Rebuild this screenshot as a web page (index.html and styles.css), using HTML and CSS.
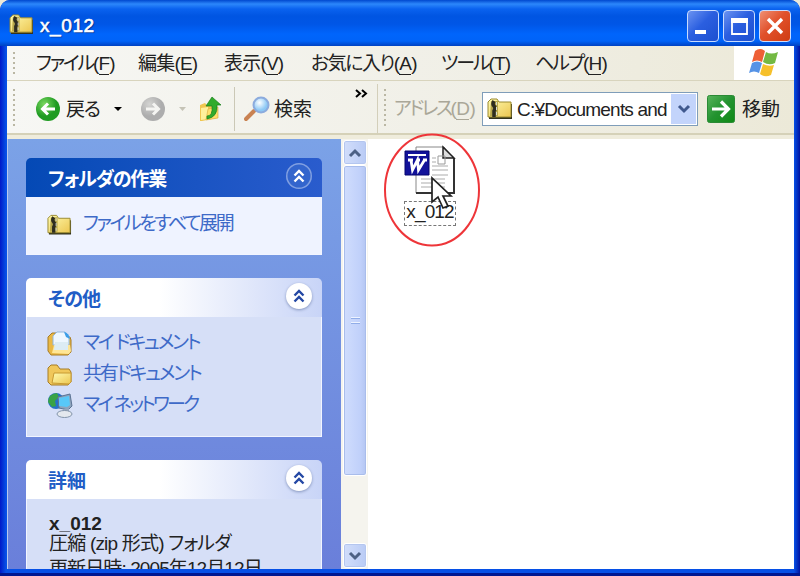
FILE: index.html
```
<!DOCTYPE html>
<html lang="ja">
<head>
    <meta charset="UTF-8">
    <title>x_012</title>
    <link rel="stylesheet" href="styles.css">
</head>
<body>
    <svg class="defs" width="0" height="0">
        <defs>
            <linearGradient id="gold" x1="0" x2="1" y2="1">
                <stop offset="0" stop-color="#fffbb0"/>
                <stop offset="1" stop-color="#ecc650"/>
            </linearGradient>
            <linearGradient id="go-green" x1="0" x2="1" y2="1">
                <stop offset="0" stop-color="#58b45c"/>
                <stop offset=".5" stop-color="#239330"/>
                <stop offset="1" stop-color="#0f8a14"/>
            </linearGradient>
            <radialGradient id="green" cx=".35" cy=".3">
                <stop offset="0" stop-color="#7bd860"/>
                <stop offset="1" stop-color="#1f9b22"/>
            </radialGradient>
            <radialGradient id="gray" cx=".35" cy=".3">
                <stop offset="0" stop-color="#d4d4d2"/>
                <stop offset="1" stop-color="#adadad"/>
            </radialGradient>
            <radialGradient id="lens" cx=".4" cy=".35">
                <stop offset="0" stop-color="#fff"/>
                <stop offset="1" stop-color="#8cc8f5"/>
            </radialGradient>
            <symbol id="zip" viewBox="0 0 26 22">
                <path d="M2 21V6l3-3h6l2 3h12v15z" fill="#33321c"/>
                <path d="M1 19V4l3-3h6l2 3h12v15z" fill="url(#gold)" stroke="#9a8a30"/>
                <path d="M4 3h7v15H3z" fill="#b7a84c"/>
                <path d="M7 3q-2 3 0 5t0 5v6" fill="none" stroke="#2d2c20" stroke-width="3.500"/>
                <path d="M9.500 4v14" stroke="#d9d9cf" stroke-dasharray="3 2"/>
            </symbol>
            <symbol id="chevrons" viewBox="0 0 26 26">
                <path d="M8.500 12.500L13 8l4.500 4.500M8.500 18.500L13 14l4.500 4.500" fill="none" stroke="currentColor" stroke-width="2.400"/>
            </symbol>
        </defs>
    </svg>

    <div class="window">
        <div class="titlebar">
            <svg class="title-icon" width="25" height="21"><use href="#zip"/></svg>
            <div class="title">x_012</div>
            <div class="window-buttons">
                <button class="win-btn">
                    <svg width="30" height="30"><path d="M7 19h11v4H7z" fill="#fff"/></svg>
                </button>
                <button class="win-btn">
                    <svg width="30" height="30"><path d="M8 8h15v15H8z" fill="none" stroke="#fff" stroke-width="1.800"/><path d="M7 7h17v5H7z" fill="#fff"/></svg>
                </button>
                <button class="win-btn close">
                    <svg width="30" height="30"><path d="M8 8l14 14M22 8L8 22" stroke="#fff" stroke-width="3.400"/></svg>
                </button>
            </div>
        </div>

        <div class="menubar">
            <div class="grip"></div>
            <div class="menu">
                <div><span class="kana">ファイル</span>(<u>F</u>)</div>
                <div>編集(<u>E</u>)</div>
                <div>表示(<u>V</u>)</div>
                <div><span class="mixed">お気に入り</span>(<u>A</u>)</div>
                <div><span class="kana">ツール</span>(<u>T</u>)</div>
                <div><span class="kana">ヘルプ</span>(<u>H</u>)</div>
            </div>
            <div class="throbber">
                <svg width="32" height="30" viewBox="0 0 32 30">
                    <path d="M7 3q5-4 10 0l-3 11q-5-3-10 0z" fill="#ee5f35"/>
                    <path d="M18 4q5 3 12 0l-3 11q-6 3-12-1z" fill="#74b943"/>
                    <path d="M4 15q5-3 10 0l-3 10q-5-3-10 0z" fill="#5593e6"/>
                    <path d="M15 16q6 3 11 1l-3 10q-6 3-11-1z" fill="#f6c02b"/>
                </svg>
            </div>
        </div>

        <div class="toolbar">
            <div class="nav-tools">
                <div class="grip tall"></div>
                <svg class="back" width="26" height="26"><circle cx="13" cy="13" r="12" fill="url(#green)"/><path d="M20 13H8M13 7.500L7.500 13l5.500 5.500" fill="none" stroke="#fff" stroke-width="3"/></svg>
                <span class="back-label">戻る</span>
                <svg class="drop" width="10" height="6"><path d="M1 1h8L5 5z" fill="#000"/></svg>
                <svg class="forward" width="26" height="26"><circle cx="13" cy="13" r="12" fill="url(#gray)"/><path d="M6 13h12M13 7.500l5.500 5.500-5.500 5.500" fill="none" stroke="#f5f5f2" stroke-width="3"/></svg>
                <svg class="drop-off" width="9" height="6"><path d="M1 1h7L4.500 5z" fill="#c5c3b6"/></svg>
                <svg class="up" width="24" height="26">
                    <path d="M1 9l5-2 3 3h9v12L3 25H1z" fill="#f0c750"/>
                    <path d="M2 24V12l7-1v12z" fill="#fff09a"/>
                    <path d="M7 24l12-2V11L9 13z" fill="#ffdf6b" stroke="#d5a83c" stroke-width=".6"/>
                    <path d="M8 20q6 0 5-10H7l6-9 9 8h-4q1 12-10 14z" fill="#31ab2b" stroke="#197f1b" stroke-width=".7"/>
                </svg>
                <div class="sep"></div>
                <svg class="search" width="26" height="26">
                    <path d="M2 23l8-8" stroke="#c98252" stroke-width="4" stroke-linecap="round"/>
                    <circle cx="17" cy="9" r="7.500" fill="url(#lens)" stroke="#8cabdd" stroke-width="2"/>
                </svg>
                <span class="search-label">検索</span>
                <svg class="more" width="14" height="10"><path d="M1 1l4 3.500L1 8M7 1l4 3.500L7 8" fill="none" stroke="#000" stroke-width="2"/></svg>
            </div>
            <div class="address-tools">
                <div class="grip tall"></div>
                <div class="address-label"><span>アドレス</span>(<u>D</u>)</div>
                <div class="address">
                    <svg width="26" height="22"><use href="#zip"/></svg>
                    <div class="path">C:¥Documents and</div>
                    <div class="address-drop"><svg width="14" height="10"><path d="M2 2l5 5 5-5" fill="none" stroke="#40598e" stroke-width="3"/></svg></div>
                </div>
                <svg class="go" width="28" height="28"><rect x=".5" y=".5" width="27" height="27" rx="2" fill="url(#go-green)" stroke="#2b8a35"/><path d="M5 14h16M14 6.500l7.500 7.500-7.500 7.500" fill="none" stroke="#fff" stroke-width="3.200"/></svg>
                <span class="go-label">移動</span>
            </div>
        </div>

        <div class="content">
            <div class="sidebar">
                <div class="group primary">
                    <div class="group-head">
                        <h2 class="head-tasks">フォルダの作業</h2>
                        <div class="toggle"><svg width="26" height="26"><use href="#chevrons"/></svg></div>
                    </div>
                    <div class="group-body">
                        <div class="task">
                            <svg width="25" height="22"><use href="#zip"/></svg>
                            <a class="t-extract">ファイルをすべて展開</a>
                        </div>
                    </div>
                </div>

                <div class="group other">
                    <div class="group-head">
                        <h2 class="head-other">その他</h2>
                        <div class="toggle"><svg width="26" height="26"><use href="#chevrons"/></svg></div>
                    </div>
                    <div class="group-body">
                        <div class="task">
                            <svg width="26" height="25">
                                <path d="M1 20V6l4-4h6v4h12l1 3v12l-3 3H4z" fill="#e9b846" stroke="#a77c25"/>
                                <path d="M6 14V5l4-4h8l4 5v8z" fill="#eef7ff" stroke="#91b7dc"/>
                                <path d="M17 1q5 1 6 7l-4-2z" fill="#3b9ee8"/>
                                <path d="M5 22l2-8h16l1 6-2 3z" fill="#ffe696"/>
                                <path d="M8 11h13v8H7z" fill="#dcecf4"/>
                            </svg>
                            <a class="t-mydocs">マイ ドキュメント</a>
                        </div>
                        <div class="task">
                            <svg width="26" height="25">
                                <path d="M1 20V6l3-3h6l3 4h9l2 3v10l-3 3H4z" fill="#f0c75a" stroke="#a77c25"/>
                                <path d="M5 21l2-10h17v9l-2 2z" fill="url(#gold)" stroke="#c89a32"/>
                            </svg>
                            <a class="t-shared">共有ドキュメント</a>
                        </div>
                        <div class="task">
                            <svg width="26" height="27">
                                <circle cx="9" cy="9" r="8" fill="#2671c9"/>
                                <path d="M1 10q0-8 9-9l2 4-4 4 1 5-4 1z" fill="#39a346"/>
                                <path d="M11 5l12-3 2 12-4 4-9-2z" fill="#8da4bd" stroke="#5b7393"/>
                                <path d="M12 6l10-2 1 9-3 2-8-1z" fill="#58c8f8"/>
                                <path d="M16 17h6v4h-6z" fill="#93a5bb"/>
                                <ellipse cx="17.500" cy="22" rx="7.500" ry="3.500" fill="#e4e8ee" stroke="#8394aa"/>
                            </svg>
                            <a class="t-network">マイ ネットワーク</a>
                        </div>
                    </div>
                </div>

                <div class="group details">
                    <div class="group-head">
                        <h2 class="head-details">詳細</h2>
                        <div class="toggle"><svg width="26" height="26"><use href="#chevrons"/></svg></div>
                    </div>
                    <div class="group-body">
                        <b>x_012</b>
                        <p class="d-type">圧縮 (zip 形式) フォルダ</p>
                        <p class="d-date">更新日時: 2005年12月12日</p>
                    </div>
                </div>
            </div>

            <div class="scrollbar">
                <div class="scroll-btn"><svg width="14" height="10"><path d="M2 8l5-5 5 5" fill="none" stroke="#4d6185" stroke-width="3"/></svg></div>
                <div class="thumb"><i></i><i></i></div>
                <div class="track"></div>
                <div class="scroll-btn"><svg width="14" height="10"><path d="M2 2l5 5 5-5" fill="none" stroke="#4d6185" stroke-width="3"/></svg></div>
            </div>

            <div class="files">
                <div class="file">
                    <svg width="52" height="52">
                        <path d="M12 2h28l10 12v34H12z" fill="#fff" stroke="#888"/>
                        <path d="M12 48h38V13" fill="none" stroke="#333" stroke-width="2"/>
                        <path d="M39 2v11h11z" fill="#ddd" stroke="#222" stroke-width="1.500"/>
                        <path d="M28 13h4M28 17h4M28 21h16M28 25h16M17 34h24M17 38h24M17 42h24M28 30h16" stroke="#c8c8c8" stroke-width="1.500"/>
                        <path d="M34 11h7v8h-7z" fill="none" stroke="#999"/>
                        <path d="M1 6h24v24H1z" fill="#12129a" stroke="#05056e"/>
                        <path d="M4 10h18" stroke="#fff" stroke-width="2"/>
                        <path d="M4 15h5M13 15h3M19 15h4M7 15l1.500 10 5-10 1 10 6-10" fill="none" stroke="#fff" stroke-width="2.800"/>
                    </svg>
                    <div class="file-name">x_012</div>
                </div>
                <svg class="highlight" width="98" height="114"><ellipse cx="49" cy="57" rx="47" ry="55.500" fill="none" stroke="#ee3539" stroke-width="2"/></svg>
                <svg class="cursor" width="24" height="36"><path d="M2 2v24l6-5 5 11 5-2-5-10h8z" fill="#fff" stroke="#222" stroke-width="1.700"/></svg>
            </div>
        </div>
    </div>
</body>
</html>
```

FILE: styles.css
```
* {
    box-sizing: border-box;
}
body {
    margin: 0;
    overflow: hidden;
    background: #ece9d8;
    font-family: "Liberation Sans", "Noto Sans CJK JP", sans-serif;
    font-size: 19px;
    color: #222;
}
svg {
    display: block;
    flex: none;
}
.defs {
    position: absolute;
}
.window {
    width: 800px;
    height: 576px;
    display: flex;
    flex-direction: column;
    padding: 0 6px 4px 7px;
    background: linear-gradient(90deg, #0019c8, #0650e6 6px, #0650e6 794px, #0013a0);
    border-bottom: 3px solid #001790;
    border-radius: 10px 10px 0 0;
    overflow: hidden;
}

/* title bar */
.titlebar {
    flex: none;
    height: 46px;
    margin: 0 -6px 0 -7px;
    padding: 3px 9px 0 9px;
    display: flex;
    align-items: center;
    background: linear-gradient(#0048cf 0, #2c87fb 4px, #0a62ef 9px, #0055e2 16px, #0056e6 24px, #0065fc 34px, #0063f8 41px, #0042c2 46px);
}
.title {
    margin: 3px 0 0 6px;
    flex: 1;
    color: #fff;
    font-size: 19px;
    letter-spacing: 0.6px;
    -webkit-text-stroke: 0.6px #fff;
    text-shadow: 1px 1px 1px #032b86;
}
.window-buttons {
    display: flex;
    gap: 4px;
    padding-top: 2px;
}
.win-btn {
    width: 32px;
    height: 32px;
    padding: 0;
    border: 1.5px solid #c9dcff;
    border-radius: 4px;
    background: linear-gradient(135deg, #6b93f1, #2b5fe0 45%, #1c4fd0);
}
.win-btn.close {
    background: linear-gradient(135deg, #ef9075, #e1512b 45%, #cf3c12);
}

/* menu bar */
.menubar {
    flex: none;
    height: 35px;
    display: flex;
    align-items: center;
    background: linear-gradient(90deg, #f7f7f4, #f0efe6 60%, #ece9d8);
    border-bottom: 1px solid #d8d4bd;
}
.grip {
    flex: none;
    width: 2px;
    height: 22px;
    margin-left: 6px;
    background: repeating-linear-gradient(#bab7a4 0 2px, transparent 2px 5px);
}
.grip.tall {
    height: 40px;
}
.menu {
    flex: 1;
    margin: -3px 0 0 21px;
    display: grid;
    grid-template-columns: 102px 86px 87px 130px 94px 1fr;
    white-space: nowrap;
    font-feature-settings: "palt";
    letter-spacing: -0.8px;
}
u {
    text-decoration: none;
    border-bottom: 1.5px solid;
}
.kana {
    letter-spacing: -2.2px;
}
.mixed {
    letter-spacing: -1.5px;
}
.throbber {
    width: 60px;
    height: 34px;
    display: flex;
    align-items: center;
    justify-content: center;
    background: #fff;
}

/* toolbar */
.toolbar {
    flex: none;
    height: 58px;
    padding-top: 3px;
    display: flex;
    background: linear-gradient(90deg, #f7f7f4, #f0efe6 60%, #ece9d8);
    border-bottom: 4px solid #efecdc;
    box-shadow: inset 0 -2px #d5d1b8;
}
.nav-tools,
.address-tools {
    display: flex;
    align-items: center;
    white-space: nowrap;
    padding-bottom: 2px;
}
.nav-tools {
    width: 371px;
    border-right: 1px solid #d3cfba;
}
.back {
    margin-left: 20px;
}
.back-label {
    width: 34px;
    margin: -3px 0 0 5px;
    letter-spacing: -2px;
}
.drop {
    margin-left: 13px;
}
.forward {
    margin-left: 17px;
}
.drop-off {
    margin-left: 12px;
}
.up {
    margin-left: 12px;
}
.sep {
    width: 1px;
    height: 44px;
    margin-left: 11px;
    background: #cbc8b6;
}
.search {
    margin-left: 9px;
}
.search-label {
    margin: -3px 0 0 4px;
}
.more {
    margin: -30px 0 0 43px;
}
.address-tools {
    flex: 1;
}
.address-label {
    width: 84px;
    margin: -4px 0 0 8px;
    color: #aaa798;
    font-feature-settings: "palt";
    letter-spacing: -0.6px;
}
.address-label span {
    letter-spacing: -2.5px;
}
.address {
    width: 216px;
    height: 34px;
    margin-left: 4px;
    padding-left: 4px;
    display: flex;
    align-items: center;
    background: #fff;
    border: 1.5px solid #7f9db9;
}
.path {
    flex: 1;
    margin: 3px 0 0 4px;
    letter-spacing: -0.8px;
}
.address-drop {
    width: 25px;
    height: 30px;
    margin-right: 1px;
    display: flex;
    align-items: center;
    justify-content: center;
    background: #c3d4fb;
}
.go {
    margin-left: 9px;
}
.go-label {
    margin: -3px 0 0 7px;
}

/* explorer area */
.content {
    flex: 1;
    min-height: 0;
    display: flex;
    background: #fff;
}
.sidebar {
    width: 334px;
    padding: 19px 19px 0 18px;
    overflow: hidden;
    background: linear-gradient(#7ba2e7, #6a7fda);
    border-left: 1px solid #b8c8f0;
}
.group {
    margin-bottom: 23px;
}
.group-head {
    height: 39px;
    padding: 0 10px 3px 22px;
    display: flex;
    align-items: center;
    justify-content: space-between;
    border-radius: 5px 5px 0 0;
    background: linear-gradient(90deg, #fff 0, #fff 45%, #c8d4f7);
}
.group-head h2 {
    margin: 3px 0 0;
    font-size: 19px;
    white-space: nowrap;
    font-feature-settings: "palt";
    color: #215dc6;
}
.toggle {
    width: 26px;
    height: 26px;
    border-radius: 50%;
    background: #fff;
    color: #2448a4;
    box-shadow: 0 1px 3px #8494bd;
}
.primary .group-head {
    background: linear-gradient(90deg, #0449b5, #2a5ccd);
}
.primary h2 {
    color: #fff;
}
.primary .toggle {
    color: #fff;
    background: #3365cd;
    box-shadow: inset 0 0 0 1.5px #809fe1;
}
.group-body {
    padding: 11px 0 0 20px;
    background: #d6dff7;
    border: 1px solid #f2f5ff;
    border-top: none;
}
.primary .group-body {
    height: 58px;
    padding-top: 12px;
    background: #eff3ff;
}
.other .group-body {
    height: 120px;
}
.task {
    height: 31px;
    display: flex;
    align-items: center;
}
.task a {
    margin: -6px 0 0 10px;
    color: #3e6ac8;
    white-space: nowrap;
    font-feature-settings: "palt";
}
.head-tasks {
    letter-spacing: -1.2px;
}
.head-other {
    letter-spacing: -0.8px;
}
.task .t-extract {
    margin-left: 11px;
    letter-spacing: -2.4px;
}
.t-mydocs,
.t-shared {
    letter-spacing: -2.2px;
}
.t-network {
    letter-spacing: -2.8px;
}
.details .group-body {
    height: 100px;
    padding: 15px 0 0 22px;
    line-height: 20px;
    color: #222;
    white-space: nowrap;
    font-feature-settings: "palt";
}
.details b {
    display: block;
}
.details p {
    margin: 0;
    letter-spacing: -0.8px;
}
.details .d-date {
    margin-top: 5px;
    letter-spacing: -0.9px;
}

/* scrollbar */
.scrollbar {
    width: 27px;
    padding: 1px 1px 1px 2px;
    display: flex;
    flex-direction: column;
    background: #f5f4ee;
}
.scroll-btn {
    flex: none;
    height: 25px;
    display: flex;
    align-items: center;
    justify-content: center;
    background: linear-gradient(90deg, #d2defb, #b9cbf5);
    border: 1px solid #fff;
    border-radius: 3px;
    box-shadow: inset 0 0 0 1px #b4c6ef;
}
.thumb {
    flex: none;
    height: 311px;
    display: flex;
    flex-direction: column;
    align-items: center;
    justify-content: center;
    gap: 3px;
    background: linear-gradient(90deg, #d0ddfd, #c0d0fa 75%, #b4c6f2);
    border: 1px solid #fff;
    border-radius: 3px;
    box-shadow: inset 0 0 0 1px #a9bdeb;
}
.thumb i {
    width: 9px;
    height: 2px;
    border-top: 1px solid #edf3ff;
    border-bottom: 1px solid #91ade8;
}
.track {
    flex: 1;
}

/* files */
.files {
    flex: 1;
    position: relative;
    padding: 6px 0 0 36px;
}
.file {
    width: 52px;
    display: flex;
    flex-direction: column;
    align-items: center;
}
.file-name {
    height: 25px;
    margin-top: 4px;
    padding: 0 1px;
    line-height: 20px;
    letter-spacing: -0.9px;
    border: 1.5px dashed #777;
}
.highlight {
    position: absolute;
    left: 15px;
    top: -6px;
}
.cursor {
    position: absolute;
    left: 62px;
    top: 37px;
}
```
